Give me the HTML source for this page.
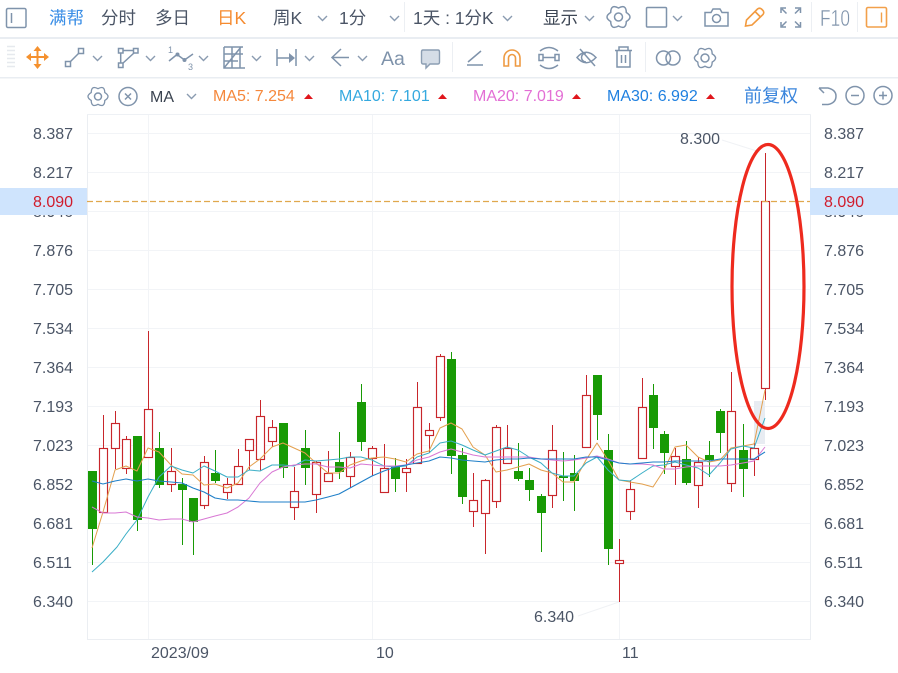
<!DOCTYPE html>
<html><head><meta charset="utf-8"><style>
html,body{margin:0;padding:0;background:#fff;width:898px;height:673px;overflow:hidden}
svg{display:block}
text{font-family:"Liberation Sans","Noto Sans CJK SC",sans-serif}
.ax{font-size:16px;fill:#4b5566}
.top{font-size:17.5px;fill:#4b5566}
.ic{fill:none;stroke:#7f93ab;stroke-width:1.5}
.ch{fill:none;stroke:#8a9bb0;stroke-width:1.4}
.w{stroke-width:1;fill:none}
</style></head><body>
<svg width="898" height="673" viewBox="0 0 898 673" xmlns="http://www.w3.org/2000/svg">
<defs>
<path id="g" d="M0-9Q7.6-13.2 7.8-4.5Q15.2 0 7.8 4.5Q7.6 13.2 0 9Q-7.6 13.2-7.8 4.5Q-15.2 0-7.8-4.5Q-7.6-13.2 0-9Z"/>
<path id="c" d="M0 0L4.5 4.5L9 0"/>
</defs>

<rect x="0" y="37" width="898" height="2" fill="#e9edf2"/>
<rect x="0" y="77" width="898" height="1.5" fill="#e9edf2"/>
<rect x="87" y="114" width="724" height="1" fill="#eef1f5"/>

<!-- ROW 1 -->
<rect x="6.5" y="8.5" width="19.5" height="19" rx="1.5" class="ic"/><path d="M11.5 13V23" class="ic" stroke-width="1"/>
<text x="49" y="24" font-size="17.5" fill="#3a8ee6">满帮</text>
<text x="101" y="24" class="top">分时</text>
<text x="155" y="24" class="top">多日</text>
<text x="217" y="24" font-size="17.5" fill="#f58a2e">日K</text>
<text x="273" y="24" class="top">周K</text>
<use href="#c" x="318" y="16" class="ch"/>
<text x="339" y="24" class="top">1分</text>
<use href="#c" x="390" y="16" class="ch"/>
<path d="M404.5 2V32" stroke="#eceff3"/>
<text x="413" y="24" class="top">1天 : 1分K</text>
<use href="#c" x="503" y="16" class="ch"/>
<text x="543" y="24" fill="#3d4654" font-size="17.5">显示</text>
<use href="#c" x="585" y="16" class="ch"/>
<use href="#g" transform="translate(618.5 17)" class="ic"/><circle cx="618.5" cy="17" r="4" class="ic"/>
<rect x="646.5" y="7.5" width="20" height="19.5" rx="1" class="ic"/>
<use href="#c" x="673" y="16" class="ch"/>
<path d="M705 12.5H711L713 9H720L722 12.5H728V26H705Z" class="ic"/><circle cx="716.5" cy="18.5" r="4" class="ic"/>
<path d="M745.5 26L746.5 20L757.5 9Q759.5 7.5 761.5 9L763 10.5Q764.5 12.5 763 14.5L752 25ZM755 11.5L761 17.5" fill="none" stroke="#f29a3f" stroke-width="1.6"/>
<path d="M781 13V8H786M795 8H800.5V13M781 22V27H786M795 27H800.5V22M782 9L786.5 13.5M799.5 9L795 13.5M782 26L786.5 21.5M799.5 26L795 21.5" class="ic"/>
<path d="M811.5 2V32M857.5 2V32" stroke="#eceff3"/>
<text x="820" y="26" font-size="23" fill="#7f93ab" stroke="#fff" stroke-width=".45" textLength="30" lengthAdjust="spacingAndGlyphs">F10</text>
<rect x="866.5" y="7.5" width="20" height="19.5" rx="1.5" fill="none" stroke="#f2a04a" stroke-width="1.6"/><path d="M881.5 12.5V22.5" stroke="#f2a04a" stroke-width="1.4"/>

<!-- ROW 2 -->
<path d="M7 46.5H15M7 50.5H15M7 54.5H15M7 58.5H15M7 62.5H15M7 66.5H15" stroke="#e6e9ee" stroke-width="1.5"/>
<g stroke="#f5912e" stroke-width="2" fill="none"><path d="M28 57H47M37.5 48V67"/></g>
<path d="M37.5 46L33.5 51H41.5ZM37.5 69L33.5 64H41.5ZM26 57L31 53V61ZM49 57L44 53V61Z" fill="#f5912e"/>
<rect x="65.5" y="61.5" width="5" height="5" class="ic"/><rect x="78.5" y="48.5" width="5" height="5" class="ic"/><path d="M70 62L79 53" class="ic"/>
<use href="#c" x="93" y="56" class="ch"/>
<rect x="118.5" y="48.5" width="4.5" height="4.5" class="ic"/><rect x="133.5" y="48.5" width="4.5" height="4.5" class="ic"/><rect x="118.5" y="63" width="4.5" height="4.5" class="ic"/>
<path d="M123 50.5H133.5M120.7 53V63M134 53L122.5 63.5" class="ic"/>
<use href="#c" x="146" y="56" class="ch"/>
<path d="M169 61L177 54.5L184.5 60L193 54" class="ic"/><circle cx="177.5" cy="54.5" r="2" fill="#7f93ab"/><circle cx="184.5" cy="60" r="2" fill="#7f93ab"/>
<text x="168" y="53" font-size="9" fill="#7f93ab">1</text><text x="188" y="70" font-size="9" fill="#7f93ab">3</text>
<use href="#c" x="199" y="56" class="ch"/>
<path d="M224 47V68H245M224 47H243M224 54H243M224 61H238M224 68L241 47M232 47V68M240 47V68" class="ic" stroke-width="1.4"/>
<use href="#c" x="252" y="56" class="ch"/>
<path d="M277 49V66M296 49V66M277 58H292" class="ic"/><path d="M289 53L295 58L289 63Z" fill="#7f93ab"/>
<use href="#c" x="305" y="56" class="ch"/>
<path d="M341 49L332 57.5L341 66M332 57.5H349" class="ic"/>
<use href="#c" x="358" y="56" class="ch"/>
<text x="381" y="65" font-size="19.5" fill="#7f93ab">Aa</text>
<path d="M423 50H438Q439.5 50 439.5 52V62Q439.5 64 438 64H430L426 68V64H423Q421.5 64 421.5 62V52Q421.5 50 423 50Z" fill="#d5dde7" stroke="#8c9eb3" stroke-width="1.4"/>
<path d="M452.5 42V72" stroke="#eceff3"/>
<path d="M467 65H483M468 62L481 51" class="ic"/>
<path d="M504 66V58A8 8 0 0 1 520 58V66H515.5V58A3.5 3.5 0 0 0 508.5 58V66Z" fill="none" stroke="#ee9a42" stroke-width="1.6"/>
<path d="M540 51Q549 44 558 51M540 65Q549 72 558 65" class="ic"/><rect x="539" y="54.5" width="4" height="6" class="ic"/><rect x="555" y="54.5" width="4" height="6" class="ic"/><path d="M543 57.5H555" class="ic"/>
<path d="M577 57.5Q586 47 596 57.5Q586 68 577 57.5Z" class="ic"/><path d="M580 49L595 66M586 53A4.5 4.5 0 0 0 586 62" class="ic"/>
<path d="M615 50.5H632M619 50.5V47H628V50.5M617 50.5V67H630V50.5M621.5 55V63M625.5 55V63" class="ic"/>
<path d="M645.5 42V72" stroke="#eceff3"/>
<circle cx="663.5" cy="58" r="7" class="ic"/><circle cx="673" cy="58" r="7" class="ic"/>
<use href="#g" transform="translate(705 58) scale(.92)" class="ic"/><circle cx="705" cy="58" r="4" class="ic"/>

<!-- ROW 3 -->
<use href="#g" transform="translate(98 96.5) scale(.87)" class="ic"/>
<circle cx="98" cy="96.5" r="3.5" class="ic"/>
<circle cx="128" cy="96.5" r="9" class="ic"/><path d="M125 93.5L131 99.5M131 93.5L125 99.5" class="ic"/>
<text x="150" y="102" font-size="16" fill="#3a4350">MA</text>
<use href="#c" x="187" y="94" class="ch"/>
<text x="213" y="101" font-size="16" fill="#f5883c">MA5: 7.254</text>
<path d="M304 99H313L308.5 94Z" fill="#e0161c"/>
<text x="339" y="101" font-size="16" fill="#35a9df">MA10: 7.101</text>
<path d="M438 99H447L442.5 94Z" fill="#e0161c"/>
<text x="473" y="101" font-size="16" fill="#e36fd5">MA20: 7.019</text>
<path d="M572 99H581L576.5 94Z" fill="#e0161c"/>
<text x="607" y="101" font-size="16" fill="#1f80e0">MA30: 6.992</text>
<path d="M706 99H715L710.5 94Z" fill="#e0161c"/>
<text x="744" y="102" font-size="18" fill="#3a85dc">前复权</text>
<path d="M819 88H828Q836 90 836 96Q836 103 828 104.5H822M819 88L824 93" class="ic"/>
<circle cx="855" cy="95.5" r="9" class="ic"/><path d="M851 95.5H859" class="ic"/>
<circle cx="883" cy="95.5" r="9" class="ic"/><path d="M879 95.5H887M883 91.5V99.5" class="ic"/>

<!-- GRID -->
<path d="M87 133.5H810M87 172.5H810M87 211.5H810M87 250.5H810M87 289.5H810M87 328.5H810M87 367.5H810M87 406.5H810M87 445.5H810M87 484.5H810M87 523.5H810M87 562.5H810M87 601.5H810M148.5 115V639M372.5 115V639M619.5 115V639" stroke="#f2f4f7" fill="none"/>
<path d="M87.5 115V639.5H810.5V115" stroke="#ebeef2" fill="none"/>

<!-- AXIS LABELS -->
<g class="ax">
<text x="33" y="139">8.387</text><text x="33" y="178">8.217</text><text x="33" y="217">8.046</text><text x="33" y="256">7.876</text><text x="33" y="295">7.705</text><text x="33" y="334">7.534</text><text x="33" y="373">7.364</text><text x="33" y="412">7.193</text><text x="33" y="451">7.023</text><text x="33" y="490">6.852</text><text x="33" y="529">6.681</text><text x="33" y="568">6.511</text><text x="33" y="607">6.340</text>
<text x="824" y="139">8.387</text><text x="824" y="178">8.217</text><text x="824" y="217">8.046</text><text x="824" y="256">7.876</text><text x="824" y="295">7.705</text><text x="824" y="334">7.534</text><text x="824" y="373">7.364</text><text x="824" y="412">7.193</text><text x="824" y="451">7.023</text><text x="824" y="490">6.852</text><text x="824" y="529">6.681</text><text x="824" y="568">6.511</text><text x="824" y="607">6.340</text>
<text x="151" y="658">2023/09</text><text x="376" y="658">10</text><text x="622" y="658">11</text>
</g>
<rect x="0" y="188" width="87" height="27" fill="#cfe4fd"/>
<rect x="810" y="188" width="88" height="27" fill="#cfe4fd"/>
<text x="33" y="207" font-size="16" fill="#d01c2c">8.090</text>
<text x="824" y="207" font-size="16" fill="#d01c2c">8.090</text>

<rect x="754" y="401" width="11" height="43" fill="#e8ecf2"/>

<!-- WICKS -->
<path class="w" stroke="#c8262b" d="M103.5 415V512M115.5 411V469M126.5 436V474M148.5 331V457M171.5 448V492M204.5 456V509M227.5 478V499M238.5 449V484M249.5 450V470M260.5 400V471M272.5 420V447M294.5 467V520M316.5 461V513M328.5 451V481M350.5 452V488M372.5 446V476M384.5 444V492M406.5 459V492M417.5 382V463M429.5 423V453M440.5 354V421M473.5 473V527M485.5 479V554M496.5 425V508M507.5 425V463M552.5 425V508M586.5 375V448M619.5 539V602M630.5 480V520M642.5 378V458M675.5 448V485M698.5 457V508M731.5 372V492M754.5 443V476M765.5 153V400"/>
<path class="w" stroke="#189a05" d="M92.5 471V565M137.5 436V531M159.5 432V488M182.5 478V545M193.5 498V555M215.5 450V483M283.5 423V478M305.5 430V485M339.5 432V479M361.5 384V451M395.5 458V492M451.5 352V474M462.5 448V504M518.5 443V481M529.5 468V501M541.5 494V552M563.5 452V501M574.5 455V511M597.5 375V440M608.5 434V565M653.5 384V449M664.5 431V474M686.5 441V485M709.5 441V477M720.5 409V453M743.5 424V497"/>
<!-- GREEN BODIES -->
<g fill="#189a05">
<rect x="88" y="471" width="9" height="58"/><rect x="133" y="436" width="9" height="84"/><rect x="155" y="448" width="9" height="37"/><rect x="178" y="484" width="9" height="6"/><rect x="189" y="498" width="9" height="24"/><rect x="211" y="473" width="9" height="8"/><rect x="279" y="423" width="9" height="45"/><rect x="301" y="448" width="9" height="20"/><rect x="335" y="462" width="9" height="10"/><rect x="357" y="402" width="9" height="40"/><rect x="391" y="466" width="9" height="13"/><rect x="447" y="359" width="9" height="97"/><rect x="458" y="455" width="9" height="42"/><rect x="514" y="471" width="9" height="8"/><rect x="525" y="480" width="9" height="10"/><rect x="537" y="496" width="9" height="17"/><rect x="559" y="476" width="9" height="2"/><rect x="570" y="473" width="9" height="8"/><rect x="593" y="375" width="9" height="40"/><rect x="604" y="450" width="9" height="99"/><rect x="649" y="395" width="9" height="33"/><rect x="660" y="434" width="9" height="19"/><rect x="682" y="459" width="9" height="24"/><rect x="705" y="455" width="9" height="5"/><rect x="716" y="411" width="9" height="22"/><rect x="739" y="450" width="9" height="19"/>
</g>
<!-- RED BODIES -->
<g fill="#fff" stroke="#c8262b" stroke-width="1.15">
<rect x="99.5" y="448.5" width="8" height="64"/><rect x="111.5" y="423.5" width="8" height="25"/><rect x="122.5" y="439.5" width="8" height="29"/><rect x="144.5" y="409.5" width="8" height="48"/><rect x="167.5" y="471.5" width="8" height="13"/><rect x="200.5" y="462.5" width="8" height="43"/><rect x="223.5" y="484.5" width="8" height="8"/><rect x="234.5" y="466.5" width="8" height="18"/><rect x="245.5" y="439.5" width="8" height="11"/><rect x="256.5" y="416.5" width="8" height="43"/><rect x="268.5" y="427.5" width="8" height="14"/><rect x="290.5" y="491.5" width="8" height="16"/><rect x="312.5" y="462.5" width="8" height="32"/><rect x="324.5" y="473.5" width="8" height="8"/><rect x="346.5" y="457.5" width="8" height="19"/><rect x="368.5" y="448.5" width="8" height="10"/><rect x="380.5" y="468.5" width="8" height="24"/><rect x="402.5" y="468.5" width="8" height="4"/><rect x="413.5" y="407.5" width="8" height="56"/><rect x="425.5" y="430.5" width="8" height="5"/><rect x="436.5" y="356.5" width="8" height="61"/><rect x="469.5" y="500.5" width="8" height="11"/><rect x="481.5" y="480.5" width="8" height="33"/><rect x="492.5" y="427.5" width="8" height="74"/><rect x="503.5" y="448.5" width="8" height="15"/><rect x="548.5" y="450.5" width="8" height="45"/><rect x="582.5" y="395.5" width="8" height="52"/><rect x="615.5" y="560.5" width="8" height="3"/><rect x="626.5" y="489.5" width="8" height="22"/><rect x="638.5" y="407.5" width="8" height="51"/><rect x="671.5" y="456.5" width="8" height="10"/><rect x="694.5" y="462.5" width="8" height="23"/><rect x="727.5" y="411.5" width="8" height="72"/><rect x="750.5" y="448.5" width="8" height="11"/><rect x="761.5" y="201.5" width="8" height="187"/>
</g>

<!-- MA LINES -->
<g fill="none" stroke-width="1" stroke-linejoin="round">
<polyline stroke="#e3a04e" points="92,548 103,512 115,470 126,466 137,471 148,448 159,452 171,465 182,474 193,475 204,485 215,484 227,488 238,483 249,467 260,459 272,447 283,443 294,448 305,453 316,463 328,473 339,473 350,465 361,461 372,458 384,457 395,459 406,462 417,454 429,451 440,428 451,423 462,429 473,447 485,455 496,472 507,470 518,467 529,464 541,470 552,473 563,482 574,482 586,460 597,443 608,460 619,480 630,482 642,484 653,487 664,470 675,447 686,445 698,457 709,462 720,460 731,448 743,446 754,444 765,390"/>
<polyline stroke="#3aaec6" points="92,572 103,562 117,547 126,534 137,520 148,497 159,477 171,466 182,470 193,473 204,466 215,471 227,477 238,477 249,470 260,471 272,465 283,465 294,466 305,460 316,461 328,460 339,459 350,457 361,457 372,460 384,466 395,467 406,466 417,457 429,453 440,443 451,441 462,445 473,450 485,455 496,451 507,447 518,450 529,457 541,463 552,473 563,476 574,476 586,463 597,457 608,470 619,480 630,481 642,473 653,466 664,465 675,462 686,465 698,468 709,475 720,463 731,449 743,446 754,448 765,418"/>
<polyline stroke="#d878d4" points="92,507 103,513 115,513 126,512 137,517 148,518 159,520 171,519 182,519 193,522 204,519 215,516 227,513 238,507 249,498 260,483 272,472 283,467 294,465 305,464 316,464 328,467 339,467 350,468 361,464 372,465 384,466 395,466 406,465 417,460 429,457 440,452 451,449 462,452 473,455 485,457 496,457 507,457 518,457 529,457 541,459 552,460 563,461 574,460 586,458 597,456 608,459 619,463 630,464 642,464 653,465 664,469 675,469 686,467 698,466 709,466 720,466 731,465 743,463 754,461 765,447"/>
<polyline stroke="#1f7fc8" stroke-width="1.1" points="92,481 103,484 115,481 126,479 137,481 148,479 159,481 171,482 182,483 193,488 204,492 215,498 227,500 238,500 249,501 260,502 272,502 283,502 294,502 305,502 316,500 328,497 339,494 350,488 361,482 372,476 384,471 395,467 406,465 417,463 429,461 440,457 451,458 462,460 473,461 485,462 496,460 507,459 518,459 529,458 541,459 552,459 563,459 574,459 586,457 597,457 608,460 619,463 630,464 642,463 653,462 664,462 675,461 686,461 698,461 709,461 720,459 731,459 743,459 754,459 765,452"/>
</g>

<!-- dashed price line -->
<path d="M87 201.5H810" stroke="#e0a84e" stroke-width="1.2" stroke-dasharray="6 3"/>

<!-- leaders + extrema -->
<path d="M722 140L760 152M578 616L619 602" stroke="#f0f2f5" fill="none"/>
<text x="680" y="144" class="ax">8.300</text>
<text x="534" y="622" class="ax">6.340</text>

<!-- red ellipse -->
<ellipse cx="768" cy="286.5" rx="36" ry="142" fill="none" stroke="#ee2a1e" stroke-width="3.2"/>
</svg>
</body></html>
